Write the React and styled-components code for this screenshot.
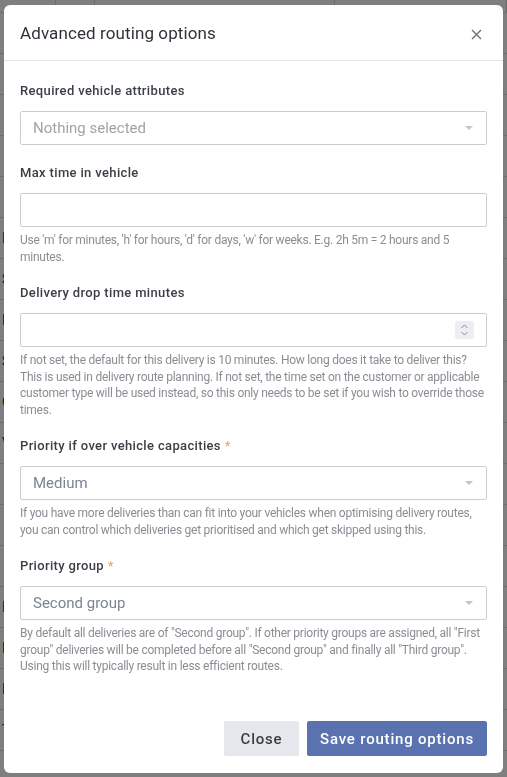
import React from 'react';
import styled, { createGlobalStyle } from 'styled-components';

const Global = createGlobalStyle`
  html, body {
    margin: 0;
    padding: 0;
    background: #fff;
    font-family: Roboto, "Liberation Sans", sans-serif;
  }
`;

const Page = styled.div`
  width: 507px;
  height: 777px;
  overflow: hidden;
  background: #fff;
`;

const TopBar = styled.div`
  display: flex;
  height: 12px;
  border-bottom: 1px solid #ddd;
`;

const TopCell = styled.div`
  width: ${(p) => p.w || 'auto'};
  flex: ${(p) => (p.grow ? 1 : 'none')};
  height: 100%;
  border-right: 1px solid #d6d6d6;
`;

const BgRow = styled.div`
  height: 40px;
  border-bottom: 1px solid #d8d8d8;
  font-size: 14px;
  color: #333;
  line-height: 40px;
  padding-left: 2px;
`;

const Overlay = styled.div`
  position: fixed;
  inset: 0;
  background: rgba(0, 0, 0, 0.5);
`;

const Modal = styled.div`
  position: absolute;
  top: 5px;
  left: 4px;
  width: 499px;
  height: 768px;
  background: #fff;
  border-radius: 6px;
  display: flex;
  flex-direction: column;
  box-sizing: border-box;
  overflow: hidden;
`;

const Header = styled.div`
  display: flex;
  align-items: center;
  justify-content: space-between;
  height: 56px;
  padding: 0 20px 0 16px;
  border-bottom: 1px solid #e6e6e6;
  box-sizing: border-box;
`;

const Title = styled.h4`
  margin: 0;
  font-size: 17px;
  font-weight: 400;
  color: #2f343b;
  letter-spacing: 0.1px;
  padding-top: 1px;
`;

const CloseX = styled.button`
  border: 0;
  background: none;
  padding: 0;
  margin-top: 4px;
  width: 12px;
  height: 12px;
  display: flex;
  cursor: pointer;
`;

const Body = styled.div`
  flex: 1;
  padding: 21px 16px 0 16px;
`;

const Group = styled.div`
  margin-bottom: 19px;
`;

const Label = styled.div`
  font-size: 13px;
  font-weight: 500;
  color: #3a3f46;
  letter-spacing: 0.35px;
  line-height: 18px;
  margin-bottom: 11px;
`;

const Req = styled.span`
  color: #f5a742;
  margin-left: 4px;
  font-size: 12px;
`;

const Field = styled.div`
  height: 34px;
  border: 1px solid #cdcdcd;
  border-radius: 2px;
  box-sizing: border-box;
  display: flex;
  align-items: center;
  justify-content: space-between;
  padding: 0 12px;
  font-size: 15px;
  color: ${(p) => (p.placeholder ? '#a3a3a3' : '#7b8494')};
`;

const Caret = styled.span`
  width: 0;
  height: 0;
  border-left: 4px solid transparent;
  border-right: 4px solid transparent;
  border-top: 4px solid #c4c4c4;
  margin-right: 1px;
`;

const Spinner = styled.span`
  width: 19px;
  height: 18px;
  background: #eceef1;
  border-radius: 2px;
  display: flex;
  align-items: center;
  justify-content: center;
`;

const Help = styled.div`
  margin-top: 5px;
  font-size: 12px;
  letter-spacing: -0.25px;
  line-height: 16.5px;
  color: #8a8e94;
`;

const Footer = styled.div`
  display: flex;
  justify-content: flex-end;
  gap: 8px;
  padding: 0 16px 17px;
`;

const Button = styled.button`
  height: 35px;
  width: ${(p) => (p.primary ? 180 : 75)}px;
  border: 0;
  border-radius: 2px;
  font-family: inherit;
  font-size: 15px;
  font-weight: 500;
  letter-spacing: 0.8px;
  padding: 0;
  background: ${(p) => (p.primary ? '#5a72b0' : '#e4e7eb')};
  color: ${(p) => (p.primary ? '#fff' : '#3b3f45')};
  cursor: pointer;
`;

const SelectField = ({ value, placeholder }) => (
  <Field placeholder={placeholder ? 1 : undefined}>
    <span>{value}</span>
    <Caret />
  </Field>
);

const App = () => (
  <>
    <Global />
    <Page>
      <TopBar>
        <TopCell w="55px" />
        <TopCell w="38px" />
        <TopCell w="239px" />
        <TopCell grow />
      </TopBar>
      {['', '', '', '', '', 'P', 'S', 'F', 'S', 'C', 'V', '', '', '', 'D', 'N', 'D', 'T'].map((t, i) => (
        <BgRow key={i}>{t}</BgRow>
      ))}
    </Page>
    <Overlay>
      <Modal>
        <Header>
          <Title>Advanced routing options</Title>
          <CloseX aria-label="Close">
            <svg width="11" height="11" viewBox="0 0 11 11">
              <path d="M1 1 L10 10 M10 1 L1 10" stroke="#6b6f75" strokeWidth="1.4" fill="none" />
            </svg>
          </CloseX>
        </Header>
        <Body>
          <Group>
            <Label>Required vehicle attributes</Label>
            <SelectField value="Nothing selected" placeholder />
          </Group>
          <Group>
            <Label>Max time in vehicle</Label>
            <Field />
            <Help>
              Use 'm' for minutes, 'h' for hours, 'd' for days, 'w' for weeks. E.g. 2h 5m = 2 hours and 5 minutes.
            </Help>
          </Group>
          <Group>
            <Label>Delivery drop time minutes</Label>
            <Field>
              <span />
              <Spinner>
                <svg width="9" height="14" viewBox="0 0 9 14">
                  <path d="M1.5 5 L4.5 2 L7.5 5 M1.5 9 L4.5 12 L7.5 9" stroke="#8a8e95" strokeWidth="1" fill="none" />
                </svg>
              </Spinner>
            </Field>
            <Help>
              If not set, the default for this delivery is 10 minutes. How long does it take to deliver this? This is
              used in delivery route planning. If not set, the time set on the customer or applicable customer type
              will be used instead, so this only needs to be set if you wish to override those times.
            </Help>
          </Group>
          <Group>
            <Label>
              Priority if over vehicle capacities<Req>*</Req>
            </Label>
            <SelectField value="Medium" />
            <Help>
              If you have more deliveries than can fit into your vehicles when optimising delivery routes, you can
              control which deliveries get prioritised and which get skipped using this.
            </Help>
          </Group>
          <Group>
            <Label>
              Priority group<Req>*</Req>
            </Label>
            <SelectField value="Second group" />
            <Help>
              By default all deliveries are of "Second group". If other priority groups are assigned, all "First
              group" deliveries will be completed before all "Second group" and finally all "Third group". Using this
              will typically result in less efficient routes.
            </Help>
          </Group>
        </Body>
        <Footer>
          <Button>Close</Button>
          <Button primary>Save routing options</Button>
        </Footer>
      </Modal>
    </Overlay>
  </>
);

export default App;
